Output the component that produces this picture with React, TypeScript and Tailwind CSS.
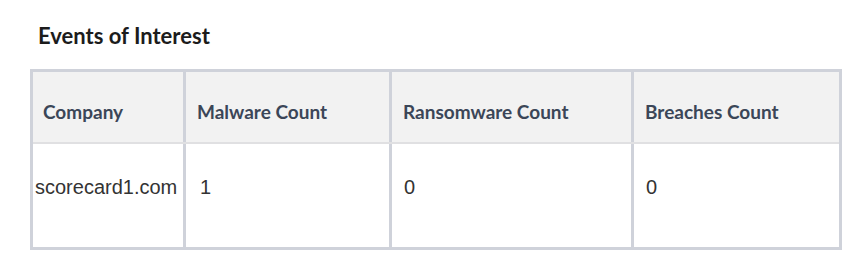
const columns = ['Company', 'Malware Count', 'Ransomware Count', 'Breaches Count'];

const rows = [{ company: 'scorecard1.com', malware: 1, ransomware: 0, breaches: 0 }];

export default function App() {
  return (
    <div className="w-[864px] h-[280px] bg-white pl-[30px] pt-[25px]">
      <h2 className="font-['Lato',sans-serif] font-bold text-[22px] leading-none text-[#1c1c1c] pl-[8px]">
        Events of Interest
      </h2>

      <div className="mt-[22px] w-[812px] border-[3px] border-[#cfd2da]">
        {/* Header row */}
        <div className="grid grid-cols-[150px_206px_242px_208px] bg-[#f2f2f2] border-b-[2px] border-[#e0e0e2]">
          {columns.map((col, i) => (
            <div
              key={col}
              className={`h-[70px] flex items-center pt-[10px] pl-[10px] font-['Lato',sans-serif] font-bold text-[19px] text-[#3b4658] ${
                i > 0 ? 'border-l-[3px] border-[#cfd2da] pl-[11px]' : ''
              }`}
            >
              {col}
            </div>
          ))}
        </div>

        {/* Data rows */}
        {rows.map(row => (
          <div
            key={row.company}
            className="grid grid-cols-[150px_206px_242px_208px] font-['Liberation_Sans',Arial,sans-serif] text-[20px] text-[#333333]"
          >
            <div className="h-[103px] pl-[2px] pt-[28px]">{row.company}</div>
            <div className="h-[103px] border-l-[3px] border-[#cfd2da] pl-[14px] pt-[28px]">{row.malware}</div>
            <div className="h-[103px] border-l-[3px] border-[#cfd2da] pl-[12px] pt-[28px]">{row.ransomware}</div>
            <div className="h-[103px] border-l-[3px] border-[#cfd2da] pl-[12px] pt-[28px]">{row.breaches}</div>
          </div>
        ))}
      </div>
    </div>
  );
}
